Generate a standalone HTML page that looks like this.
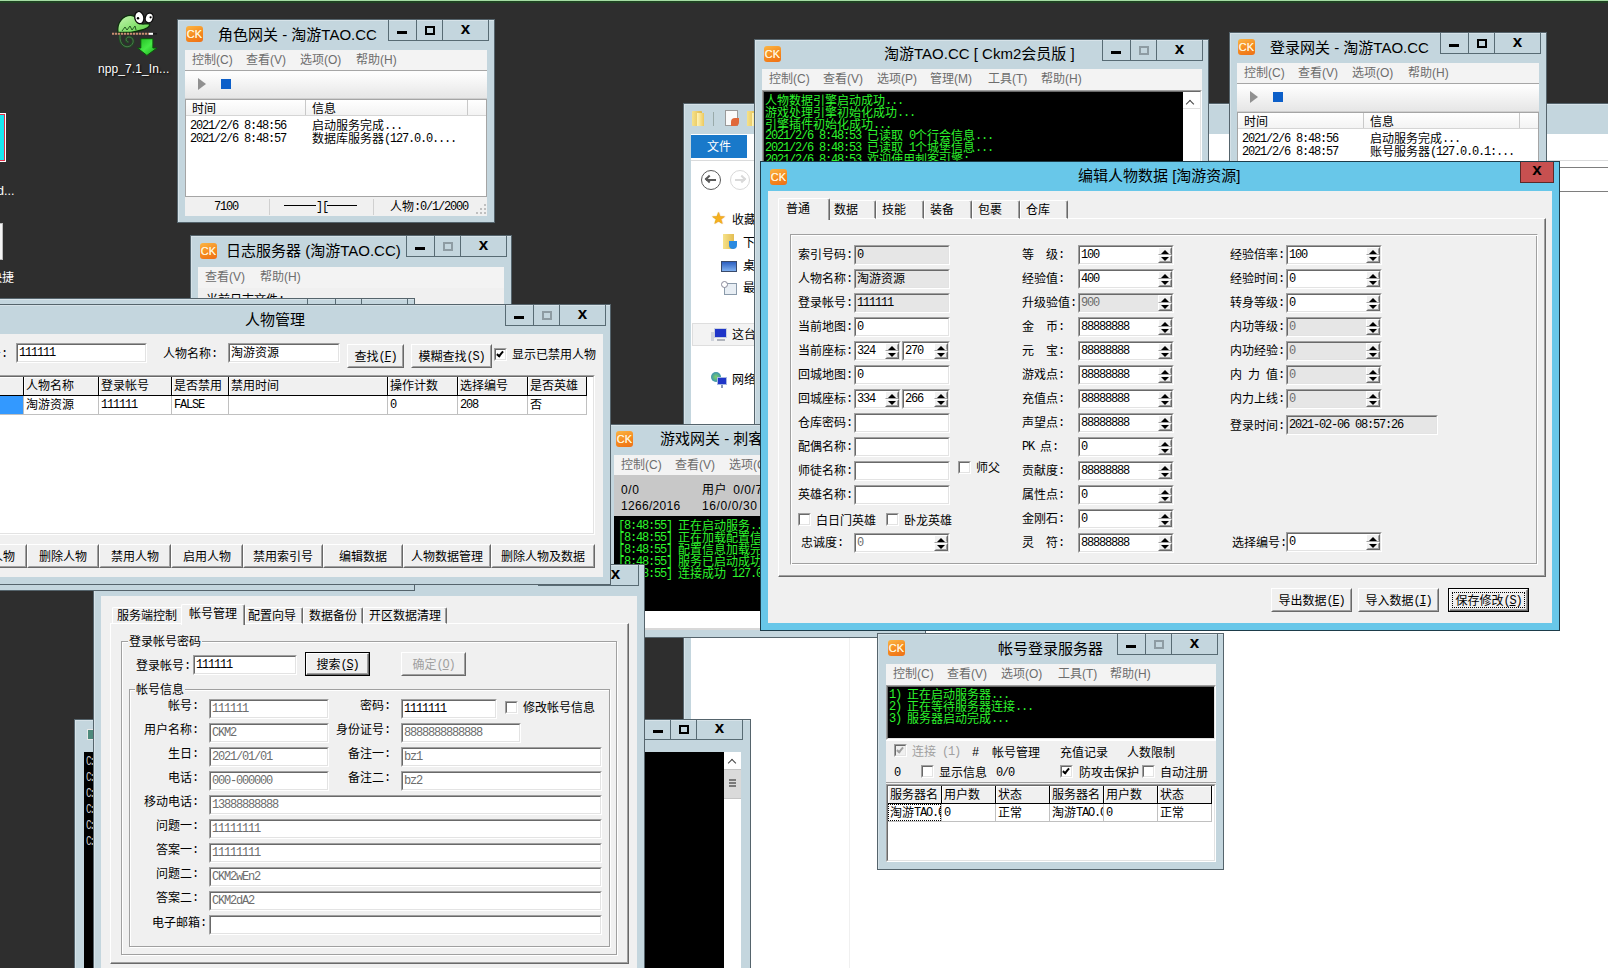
<!DOCTYPE html>
<html lang="zh-CN"><head><meta charset="utf-8"><title>desktop</title>
<style>
html,body{margin:0;padding:0;}
body{width:1608px;height:968px;overflow:hidden;background:#2e2e2e;position:relative;}
div{position:absolute;box-sizing:border-box;}
i{font-style:normal;letter-spacing:-1.2px;position:relative;top:-1px;}
u{text-decoration:underline;}
.s{font:12px/12px "Liberation Mono","Noto Sans CJK SC",monospace;white-space:nowrap;color:#000;height:12px;margin-top:2px;}
.y{font:12px/16px "Liberation Sans","Noto Sans CJK SC",sans-serif;white-space:nowrap;color:#000;}
.t{font-size:15px;line-height:20px;color:#000;}
.m{color:#6d6d6d;}
.w{background:#c4d6de;border:1px solid #55646c;box-shadow:inset 1px 1px 0 rgba(255,255,255,.3);}
.wa{background:#68c7e9;border:1px solid #1d3c4a;}
.cl{background:#f0f0f0;}
.ck{background:linear-gradient(160deg,#fbb544,#f58a1f 55%,#ee6f16);border-radius:3px;overflow:hidden;}
.ck span{position:absolute;left:0;right:0;top:2px;text-align:center;font:11px/13px "Liberation Sans",sans-serif;color:#fff3d8;letter-spacing:0;text-shadow:0 0 0.5px #fff3d8;}
.tb{border:1px solid #586b74;}
.gmin{left:8px;top:11px;width:10px;height:3px;background:#000;}
.gmax{left:8px;top:6px;width:10px;height:9px;border:2px solid #000;}
.gmax.dim{border-color:#8e9ca3;}
.gx{left:0;right:0;top:1px;text-align:center;font:bold 17px/16px "Liberation Sans",sans-serif;color:#000;}
.sk{border:1px solid;border-color:#a0a0a0 #fff #fff #a0a0a0;}
.sk:before{content:"";position:absolute;left:0;top:0;right:0;bottom:0;border:1px solid;border-color:#696969 #e3e3e3 #e3e3e3 #696969;}
.sk>div{z-index:1;}
.sk>.s{left:3px;top:3px;}
.ud{left:auto;background:#f0f0f0;border:1px solid;border-color:#fff #696969 #696969 #fff;}
.ud:before{content:"";position:absolute;left:0;top:0;right:0;bottom:0;border:1px solid;border-color:#f0f0f0 #a0a0a0 #a0a0a0 #f0f0f0;}
.uu{border-bottom-color:#a0a0a0;}
.uu:before{border-bottom-color:#f0f0f0;}
.au{left:2px;top:2px;width:0;height:0;border:4px solid transparent;border-top:0;border-bottom:4px solid #000;}
.ad{left:2px;top:1px;width:0;height:0;border:4px solid transparent;border-bottom:0;border-top:4px solid #000;}
.bt{background:#f0f0f0;border:1px solid;border-color:#fff #696969 #696969 #fff;}
.bt:before{content:"";position:absolute;left:0;top:0;right:0;bottom:0;border:1px solid;border-color:#f0f0f0 #a0a0a0 #a0a0a0 #f0f0f0;}
.bd{border:1px solid #000;}
.bd:before{border-color:#fff #696969 #696969 #fff;box-shadow:inset -1px -1px 0 #a0a0a0;}
.btx{left:0;right:0;top:50%;margin-top:-4px;text-align:center;}
.fr{border:1px dotted #000;}
.cb{border:1px solid;border-color:#a0a0a0 #fff #fff #a0a0a0;}
.cb:before{content:"";position:absolute;left:0;top:0;right:0;bottom:0;border:1px solid;border-color:#696969 #e3e3e3 #e3e3e3 #696969;}
.cm{left:3px;top:1px;width:4px;height:7px;border:solid #000;border-width:0 2px 2px 0;transform:rotate(40deg);}
.cbd .cm{border-color:#a0a0a0;}
.gb{border:1px solid #a0a0a0;box-shadow:1px 1px 0 #fff, inset 1px 1px 0 #fff;}
.con{background:#000;}
.g{color:#2df52d;}

.cmd{font:12px/16px "Liberation Mono",monospace;color:#c8c8c8;white-space:nowrap;letter-spacing:-2.6px;transform:scaleX(0.78);transform-origin:0 0;}
.car{width:6px;height:6px;border-left:1.5px solid #444;border-top:1.5px solid #444;transform:rotate(45deg);}
</style></head>
<body>
<div style="left:0px;top:0px;width:1608px;height:1px;background:#a6dba4;"></div><div style="left:0px;top:1px;width:1608px;height:2px;background:#1f4222;"></div><svg style="position:absolute;left:100px;top:4px" width="70" height="56" viewBox="0 0 70 56"><defs><linearGradient id="gb" x1="0" y1="0" x2="1" y2="1"><stop offset="0" stop-color="#c9f7b4"/><stop offset="1" stop-color="#56d23e"/></linearGradient><linearGradient id="ga" x1="0" y1="0" x2="1" y2="1"><stop offset="0" stop-color="#1fb81f"/><stop offset="0.5" stop-color="#46ea46"/><stop offset="1" stop-color="#18a018"/></linearGradient></defs><path d="M20 31 C19 41 26 45 31 41.5 C35 38 33 33 29 33 C25.5 33 25 37.5 28.5 38" fill="none" stroke="#1f4a22" stroke-width="2.6"/><path d="M20 31 C19 41 26 45 31 41.5 C35 38 33 33 29 33 C25.5 33 25 37.5 28.5 38" fill="none" stroke="#5d8a5d" stroke-width="0.7"/><path d="M18 28.5 C16.5 18 24 10.5 32 11.5 C36 12 38 16 40.5 19.5 C43 21 46 19 49.5 20 C50.5 22.5 46 25.5 40 26.5 L31 28.5 Z" fill="url(#gb)" stroke="#0c300c" stroke-width="1.3"/><path d="M22 27 l3 -4 l2 3 l3 -4 l2 4 l3 -4 l1 4" fill="none" stroke="#1c4a1c" stroke-width="0.9"/><ellipse cx="39.3" cy="13.6" rx="4.5" ry="6.2" transform="rotate(-12 39.3 13.6)" fill="#fff" stroke="#0a0a0a" stroke-width="1.3"/><ellipse cx="49.2" cy="13.9" rx="3.9" ry="4.9" transform="rotate(18 49.2 13.9)" fill="#fff" stroke="#0a0a0a" stroke-width="1.3"/><circle cx="38" cy="14.2" r="1.2" fill="#000"/><circle cx="50.6" cy="13.3" r="1.1" fill="#000"/><path d="M12 29.8 H49" stroke="#c98f72" stroke-width="2" stroke-dasharray="2.2 0.8"/><path d="M49 29.8 H53" stroke="#fff" stroke-width="2"/><path d="M53 29.8 H57" stroke="#151515" stroke-width="1.4"/><path d="M40.8 34.7 H52.9 V44 H57 L46.9 51.4 L37.6 44 H40.8 Z" fill="url(#ga)" stroke="#0b560b" stroke-width="1"/></svg><div class="y" style="left:98px;top:61px;color:#fff;font-size:12px;letter-spacing:0.1px;text-shadow:1px 1px 2px #000;">npp_7.1_In...</div><div style="left:-8px;top:113px;width:14px;height:49px;background:#18e8f0;border:1px solid #fff;box-shadow:inset 0 0 0 1px #e0304a;"></div><div class="y" style="left:-3px;top:183px;color:#fff;font-size:12.5px;">d...</div><div style="left:-8px;top:223px;width:11px;height:37px;background:#f4f4f4;border:1px solid #bbb;"></div><div class="y" style="left:-10px;top:270px;color:#fff;font-size:12px;">快捷</div>
<div class="w" style="left:683px;top:103px;width:1001px;height:901px;overflow:hidden;"><div style="left:-684px;top:-104px;width:0;height:0;"><div style="left:691px;top:134px;width:1000px;height:900px;background:#fff;"></div><div style="left:692px;top:111px;width:10px;height:15px;background:linear-gradient(90deg,#f6e28a,#e0b84a);border-radius:1px;"></div><div style="left:697px;top:113px;width:7px;height:13px;background:linear-gradient(90deg,#fff4b8,#ecc95e);"></div><div style="left:713px;top:112px;width:1px;height:14px;background:#9aa;"></div><div style="left:725px;top:110px;width:13px;height:16px;background:#fafafa;border:1px solid #9a9a9a;"></div><div style="left:731px;top:118px;width:8px;height:8px;background:#e0683a;border-radius:4px 0 4px 0;"></div><div style="left:747px;top:111px;width:10px;height:15px;background:linear-gradient(90deg,#f6e28a,#e0b84a);"></div><div style="left:752px;top:113px;width:8px;height:13px;background:linear-gradient(90deg,#fff4b8,#ecc95e);"></div><div style="left:691px;top:135px;width:56px;height:23px;background:#1979ca;"></div><div class="y" style="left:707px;top:139px;color:#fff;">文件</div><div style="left:691px;top:160px;width:1000px;height:1px;background:#dadbdc;"></div><div style="left:701px;top:170px;width:20px;height:20px;border:1.5px solid #5a5a5a;border-radius:10px;"></div><div style="left:706px;top:179px;width:10px;height:2px;background:#5a5a5a;"></div><div style="left:706px;top:176px;width:6px;height:6px;border-left:2px solid #5a5a5a;border-bottom:2px solid #5a5a5a;transform:rotate(45deg);"></div><div style="left:730px;top:170px;width:20px;height:20px;border:1.5px solid #d9d9d9;border-radius:10px;"></div><div style="left:735px;top:179px;width:10px;height:2px;background:#d9d9d9;"></div><div style="left:739px;top:176px;width:6px;height:6px;border-right:2px solid #d9d9d9;border-top:2px solid #d9d9d9;transform:rotate(45deg);"></div><div style="left:760px;top:167px;width:1000px;height:25px;border:1px solid #7e7e7e;"></div><div style="left:711px;top:209px;font:17px/18px 'DejaVu Sans',sans-serif;color:#f6b01e;text-shadow:0 0 1px #c47f00;">★</div><div class="y" style="left:732px;top:212px;">收藏夹</div><div style="left:723px;top:234px;width:11px;height:15px;background:linear-gradient(90deg,#f6e28a,#e3bd52);"></div><div style="left:729px;top:241px;width:8px;height:8px;background:#2a8ae0;border-radius:0 0 4px 4px;"></div><div class="y" style="left:743px;top:235px;">下载</div><div style="left:721px;top:261px;width:16px;height:11px;background:linear-gradient(#2c5fc0,#7fb0f0);border:1px solid #3a4a6a;"></div><div class="y" style="left:743px;top:258px;">桌面</div><div style="left:724px;top:283px;width:13px;height:12px;background:#e8eef4;border:1px solid #8a9aaa;"></div><div style="left:721px;top:281px;width:7px;height:7px;background:#fff;border:1px solid #889;border-radius:4px;"></div><div class="y" style="left:743px;top:280px;">最近访问的位置</div><div style="left:692px;top:323px;width:200px;height:23px;background:#f3f3f3;border:1px solid #dedede;"></div><div style="left:714px;top:328px;width:13px;height:10px;background:#1f35c8;border:1px solid #c8d0e0;"></div><div style="left:711px;top:332px;width:3px;height:9px;background:#d0d4dc;"></div><div style="left:717px;top:339px;width:8px;height:2px;background:#b0b4bc;"></div><div class="y" style="left:732px;top:327px;">这台电脑</div><div style="left:711px;top:372px;width:10px;height:10px;background:radial-gradient(#7fd36a,#1f78c8);border-radius:5px;"></div><div style="left:717px;top:377px;width:10px;height:8px;background:#1f35c8;border:1px solid #a8b8e0;"></div><div style="left:721px;top:385px;width:2px;height:3px;background:#8898b8;"></div><div class="y" style="left:732px;top:372px;">网络</div><div style="left:849px;top:161px;width:1px;height:900px;background:#f0f0f0;"></div></div></div>
<div class="w" style="left:74px;top:719px;width:677px;height:261px;overflow:hidden;"><div style="left:-75px;top:-720px;width:0;height:0;"><div style="left:87px;top:729px;width:12px;height:11px;background:#4e8a7c;border:1px solid #e8e8e8;"></div><div class="tb" style="left:644px;top:718px;width:27px;height:22px;"><div class="gmin"></div></div><div class="tb" style="left:670px;top:718px;width:27px;height:22px;"><div class="gmax"></div></div><div class="tb" style="left:696px;top:718px;width:47px;height:22px;"><div class="gx">x</div></div><div class="con" style="left:84px;top:752px;width:640px;height:230px;"></div><div class="cmd" style="left:86px;top:754px;">C:</div><div class="cmd" style="left:86px;top:770px;">C:</div><div class="cmd" style="left:86px;top:786px;">C:</div><div class="cmd" style="left:86px;top:802px;">C:</div><div class="cmd" style="left:86px;top:818px;">C:</div><div class="cmd" style="left:86px;top:834px;">C:</div><div style="left:724px;top:752px;width:17px;height:230px;background:#fff;"></div><div class="car" style="left:729px;top:760px;"></div><div style="left:724px;top:769px;width:17px;height:30px;background:#dadada;border-top:1px solid #c4c4c4;border-bottom:1px solid #c4c4c4;"></div><div style="left:729px;top:779px;width:7px;height:2px;background:#7a7a7a;"></div><div style="left:729px;top:782px;width:7px;height:2px;background:#7a7a7a;"></div><div style="left:729px;top:785px;width:7px;height:2px;background:#7a7a7a;"></div></div></div>
<div class="w" style="left:177px;top:19px;width:318px;height:204px;overflow:hidden;"><div style="left:-178px;top:-20px;width:0;height:0;"><div class="ck" style="left:186px;top:26px;width:17px;height:16px;"><span>CK</span></div><div class="y t" style="left:218px;top:25px;">角色网关 - 淘游TAO.CC</div><div class="tb" style="left:388px;top:19px;width:29px;height:22px;"><div class="gmin"></div></div><div class="tb" style="left:416px;top:19px;width:27px;height:22px;"><div class="gmax"></div></div><div class="tb" style="left:442px;top:19px;width:47px;height:22px;"><div class="gx">x</div></div><div class="cl" style="left:185px;top:50px;width:302px;height:166px;"></div><div style="left:185px;top:50px;width:302px;height:21px;background:#f3f3f3;"></div><div class="y m" style="left:192px;top:52px;">控制(C)</div><div class="y m" style="left:246px;top:52px;">查看(V)</div><div class="y m" style="left:300px;top:52px;">选项(O)</div><div class="y m" style="left:356px;top:52px;">帮助(H)</div><div style="left:185px;top:70px;width:302px;height:29px;background:linear-gradient(#fdfdfd 10%,#e6e6e6);border-top:1px solid #a6a6a6;border-bottom:1px solid #cfcfcf;"></div><div style="left:198px;top:78px;width:0px;height:0px;border:6px solid transparent;border-left:8px solid #909090;border-right:0;width:0;height:0;"></div><div style="left:221px;top:79px;width:10px;height:10px;background:#0c5fc9;"></div><div style="left:185px;top:99px;width:302px;height:98px;background:#fff;border:1px solid #a5a5a5;"></div><div style="left:186px;top:100px;width:300px;height:16px;background:linear-gradient(#fff,#f3f3f3);border-bottom:1px solid #d5d5d5;"></div><div style="left:305px;top:100px;width:1px;height:15px;background:#c9c9c9;"></div><div style="left:467px;top:100px;width:1px;height:15px;background:#c9c9c9;"></div><div class="s" style="left:192px;top:102px;">时间</div><div class="s" style="left:312px;top:102px;">信息</div><div class="s" style="left:190px;top:119px;"><i>2021/2/6&nbsp;8:48:56</i></div><div class="s" style="left:190px;top:132px;"><i>2021/2/6&nbsp;8:48:57</i></div><div class="s" style="left:312px;top:119px;">启动服务完成<i>...</i></div><div class="s" style="left:312px;top:132px;">数据库服务器<i>(127.0.0....</i></div><div style="left:269px;top:199px;width:1px;height:16px;background:#d0d0d0;"></div><div style="left:373px;top:199px;width:1px;height:16px;background:#d0d0d0;"></div><div class="s" style="left:214px;top:200px;"><i>7100</i></div><div style="left:284px;top:205px;width:32px;height:1px;background:#000;"></div><div class="s" style="left:316px;top:200px;"><i>][</i></div><div style="left:327px;top:205px;width:30px;height:1px;background:#000;"></div><div class="s" style="left:390px;top:200px;">人物<i>:0/1/2000</i></div><div style="left:484px;top:212px;width:2px;height:2px;background:#bfbfbf;"></div><div style="left:480px;top:212px;width:2px;height:2px;background:#bfbfbf;"></div><div style="left:476px;top:212px;width:2px;height:2px;background:#bfbfbf;"></div><div style="left:484px;top:208px;width:2px;height:2px;background:#bfbfbf;"></div><div style="left:480px;top:208px;width:2px;height:2px;background:#bfbfbf;"></div><div style="left:484px;top:204px;width:2px;height:2px;background:#bfbfbf;"></div></div></div>
<div class="w" style="left:190px;top:235px;width:322px;height:111px;overflow:hidden;"><div style="left:-191px;top:-236px;width:0;height:0;"><div class="ck" style="left:200px;top:243px;width:17px;height:16px;"><span>CK</span></div><div class="y t" style="left:226px;top:241px;">日志服务器 (淘游TAO.CC)</div><div class="tb" style="left:406px;top:235px;width:29px;height:22px;"><div class="gmin"></div></div><div class="tb" style="left:434px;top:235px;width:27px;height:22px;"><div class="gmax dim"></div></div><div class="tb" style="left:460px;top:235px;width:47px;height:22px;"><div class="gx">x</div></div><div class="cl" style="left:198px;top:267px;width:306px;height:100px;"></div><div style="left:198px;top:267px;width:306px;height:21px;background:#f3f3f3;"></div><div class="y m" style="left:205px;top:269px;">查看(V)</div><div class="y m" style="left:260px;top:269px;">帮助(H)</div><div class="s" style="left:206px;top:293px;">当前日志文件<i>:</i></div></div></div>
<div class="w" style="left:754px;top:39px;width:455px;height:561px;overflow:hidden;"><div style="left:-755px;top:-40px;width:0;height:0;"><div class="ck" style="left:764px;top:46px;width:17px;height:16px;"><span>CK</span></div><div class="y t" style="left:884px;top:44px;">淘游TAO.CC [ Ckm2会员版 ]</div><div class="tb" style="left:1102px;top:39px;width:29px;height:22px;"><div class="gmin"></div></div><div class="tb" style="left:1130px;top:39px;width:27px;height:22px;"><div class="gmax dim"></div></div><div class="tb" style="left:1156px;top:39px;width:47px;height:22px;"><div class="gx">x</div></div><div class="cl" style="left:762px;top:69px;width:440px;height:500px;"></div><div style="left:762px;top:69px;width:440px;height:22px;background:#f3f3f3;"></div><div class="y m" style="left:769px;top:71px;">控制(C)</div><div class="y m" style="left:823px;top:71px;">查看(V)</div><div class="y m" style="left:877px;top:71px;">选项(P)</div><div class="y m" style="left:930px;top:71px;">管理(M)</div><div class="y m" style="left:988px;top:71px;">工具(T)</div><div class="y m" style="left:1041px;top:71px;">帮助(H)</div><div class="sk" style="left:762px;top:90px;width:440px;height:300px;background:#000;"></div><div class="s g" style="left:765px;top:94px;">人物数据引擎启动成功<i>...</i></div><div class="s g" style="left:765px;top:106px;">游戏处理引擎初始化成功<i>...</i></div><div class="s g" style="left:765px;top:118px;">引擎插件初始化成功<i>...</i></div><div class="s g" style="left:765px;top:129px;"><i>2021/2/6&nbsp;8:48:53&nbsp;</i>已读取<i>&nbsp;0</i>个行会信息<i>...</i></div><div class="s g" style="left:765px;top:141px;"><i>2021/2/6&nbsp;8:48:53&nbsp;</i>已读取<i>&nbsp;1</i>个城堡信息<i>...</i></div><div class="s g" style="left:765px;top:153px;"><i>2021/2/6&nbsp;8:48:53&nbsp;</i>欢迎使用刺客引擎<i>:</i></div><div style="left:1183px;top:92px;width:17px;height:300px;background:#fff;"></div><div class="car" style="left:1187px;top:101px;"></div><div style="left:1183px;top:108px;width:17px;height:1px;background:#e0e0e0;"></div></div></div>
<div class="w" style="left:606px;top:424px;width:320px;height:214px;overflow:hidden;"><div style="left:-607px;top:-425px;width:0;height:0;"><div class="ck" style="left:616px;top:431px;width:17px;height:16px;"><span>CK</span></div><div class="y t" style="left:660px;top:429px;">游戏网关 - 刺客引擎</div><div class="tb" style="left:818px;top:423px;width:29px;height:22px;"><div class="gmin"></div></div><div class="tb" style="left:846px;top:423px;width:27px;height:22px;"><div class="gmax"></div></div><div class="tb" style="left:872px;top:423px;width:47px;height:22px;"><div class="gx">x</div></div><div class="cl" style="left:614px;top:455px;width:305px;height:175px;"></div><div style="left:614px;top:455px;width:305px;height:21px;background:#f3f3f3;"></div><div class="y m" style="left:621px;top:457px;">控制(C)</div><div class="y m" style="left:675px;top:457px;">查看(V)</div><div class="y m" style="left:729px;top:457px;">选项(O)</div><div class="y m" style="left:785px;top:457px;">帮助(H)</div><div style="left:614px;top:475px;width:305px;height:42px;background:#c8c8c8;"></div><div class="y" style="left:621px;top:482px;font-size:12px;letter-spacing:0.6px;">0/0</div><div class="y" style="left:702px;top:482px;font-size:12px;letter-spacing:0.6px;word-spacing:2px;">用户 0/0/7000</div><div class="y" style="left:621px;top:498px;font-size:12px;letter-spacing:0.3px;">1266/2016</div><div class="y" style="left:702px;top:498px;font-size:12px;letter-spacing:0.6px;">16/0/0/30</div><div class="con" style="left:614px;top:516px;width:305px;height:95px;"></div><div class="s g" style="left:618px;top:519px;"><i>[8:48:55]&nbsp;</i>正在启动服务<i>...</i></div><div class="s g" style="left:618px;top:531px;"><i>[8:48:55]&nbsp;</i>正在加载配置信息<i>...</i></div><div class="s g" style="left:618px;top:543px;"><i>[8:48:55]&nbsp;</i>配置信息加载完成<i>...</i></div><div class="s g" style="left:618px;top:555px;"><i>[8:48:55]&nbsp;</i>服务已启动成功<i>...</i></div><div class="s g" style="left:618px;top:567px;"><i>[8:48:55]&nbsp;</i>连接成功<i>&nbsp;127.0.0.1:5100</i></div><div style="left:614px;top:611px;width:305px;height:19px;background:#fff;border-bottom:2px solid #d8d8d8;"></div></div></div>
<div class="w" style="left:93px;top:564px;width:552px;height:421px;overflow:hidden;"><div style="left:-94px;top:-565px;width:0;height:0;"><div class="tb" style="left:538px;top:564px;width:29px;height:22px;"><div class="gmin"></div></div><div class="tb" style="left:566px;top:564px;width:27px;height:22px;"><div class="gmax dim"></div></div><div class="tb" style="left:592px;top:564px;width:47px;height:22px;"><div class="gx">x</div></div><div class="cl" style="left:101px;top:596px;width:536px;height:380px;"></div><div style="left:110px;top:623px;width:519px;height:341px;border:1px solid;border-color:#fff #696969 #696969 #fff;box-shadow:inset -1px -1px 0 #a0a0a0;"></div><div style="left:112px;top:607px;width:72px;height:17px;border:1px solid;border-color:#fff #696969 transparent #fff;border-radius:2px 2px 0 0;box-shadow:inset -1px 0 0 #a0a0a0;"></div><div class="s" style="left:117px;top:609px;">服务端控制</div><div style="left:245px;top:607px;width:58px;height:17px;border:1px solid;border-color:#fff #696969 transparent #fff;border-radius:2px 2px 0 0;box-shadow:inset -1px 0 0 #a0a0a0;"></div><div class="s" style="left:248px;top:609px;">配置向导</div><div style="left:303px;top:607px;width:60px;height:17px;border:1px solid;border-color:#fff #696969 transparent #fff;border-radius:2px 2px 0 0;box-shadow:inset -1px 0 0 #a0a0a0;"></div><div class="s" style="left:309px;top:609px;">数据备份</div><div style="left:363px;top:607px;width:84px;height:17px;border:1px solid;border-color:#fff #696969 transparent #fff;border-radius:2px 2px 0 0;box-shadow:inset -1px 0 0 #a0a0a0;"></div><div class="s" style="left:369px;top:609px;">开区数据清理</div><div style="left:181px;top:604px;width:64px;height:21px;background:#f0f0f0;border:1px solid;border-color:#fff #696969 #f0f0f0 #fff;border-bottom:0;border-radius:2px 2px 0 0;box-shadow:inset -1px 0 0 #a0a0a0;"></div><div class="s" style="left:189px;top:607px;">帐号管理</div><div class="gb" style="left:121px;top:641px;width:496px;height:314px;"></div><div class="s" style="left:128px;top:635px;background:#f0f0f0;padding:0 1px;">登录帐号密码</div><div class="s" style="left:136px;top:659px;">登录帐号<i>:</i></div><div class="sk" style="left:193px;top:655px;width:104px;height:20px;background:#fff;"><div class="s" style="left:2px;top:2px;color:#000;"><i>111111</i></div></div><div class="bt bd" style="left:305px;top:652px;width:65px;height:24px;"><div class="s btx" style="color:#000;">搜索<i>(<u>S</u>)</i></div></div><div class="bt" style="left:401px;top:652px;width:65px;height:24px;"><div class="s btx" style="color:#a0a0a0;">确定<i>(<u>O</u>)</i></div></div><div class="gb" style="left:129px;top:689px;width:481px;height:258px;"></div><div class="s" style="left:135px;top:683px;background:#f0f0f0;padding:0 1px;">帐号信息</div><div class="s" style="right:-198px;top:699px;">帐号<i>:</i></div><div class="sk" style="left:209px;top:699px;width:120px;height:20px;background:#fff;"><div class="s" style="left:2px;top:2px;color:#6d6d6d;"><i>111111</i></div></div><div class="s" style="right:-198px;top:723px;">用户名称<i>:</i></div><div class="sk" style="left:209px;top:723px;width:120px;height:20px;background:#fff;"><div class="s" style="left:2px;top:2px;color:#6d6d6d;"><i>CKM2</i></div></div><div class="s" style="right:-198px;top:747px;">生日<i>:</i></div><div class="sk" style="left:209px;top:747px;width:120px;height:20px;background:#fff;"><div class="s" style="left:2px;top:2px;color:#6d6d6d;"><i>2021/01/01</i></div></div><div class="s" style="right:-198px;top:771px;">电话<i>:</i></div><div class="sk" style="left:209px;top:771px;width:120px;height:20px;background:#fff;"><div class="s" style="left:2px;top:2px;color:#6d6d6d;"><i>000-000000</i></div></div><div class="s" style="right:-198px;top:795px;">移动电话<i>:</i></div><div class="sk" style="left:209px;top:795px;width:393px;height:20px;background:#fff;"><div class="s" style="left:2px;top:2px;color:#6d6d6d;"><i>13888888888</i></div></div><div class="s" style="right:-198px;top:819px;">问题一<i>:</i></div><div class="sk" style="left:209px;top:819px;width:393px;height:20px;background:#fff;"><div class="s" style="left:2px;top:2px;color:#6d6d6d;"><i>11111111</i></div></div><div class="s" style="right:-198px;top:843px;">答案一<i>:</i></div><div class="sk" style="left:209px;top:843px;width:393px;height:20px;background:#fff;"><div class="s" style="left:2px;top:2px;color:#6d6d6d;"><i>11111111</i></div></div><div class="s" style="right:-198px;top:867px;">问题二<i>:</i></div><div class="sk" style="left:209px;top:867px;width:393px;height:20px;background:#fff;"><div class="s" style="left:2px;top:2px;color:#6d6d6d;"><i>CKM2wEn2</i></div></div><div class="s" style="right:-198px;top:891px;">答案二<i>:</i></div><div class="sk" style="left:209px;top:891px;width:393px;height:20px;background:#fff;"><div class="s" style="left:2px;top:2px;color:#6d6d6d;"><i>CKM2dA2</i></div></div><div class="s" style="left:152px;top:916px;">电子邮箱<i>:</i></div><div class="sk" style="left:209px;top:915px;width:393px;height:20px;background:#fff;"></div><div class="s" style="right:-390px;top:699px;">密码<i>:</i></div><div class="sk" style="left:401px;top:699px;width:96px;height:20px;background:#fff;"><div class="s" style="left:2px;top:2px;color:#000;"><i>1111111</i></div></div><div class="s" style="right:-390px;top:723px;">身份证号<i>:</i></div><div class="sk" style="left:401px;top:723px;width:120px;height:20px;background:#fff;"><div class="s" style="left:2px;top:2px;color:#6d6d6d;"><i>8888888888888</i></div></div><div class="s" style="right:-390px;top:747px;">备注一<i>:</i></div><div class="sk" style="left:401px;top:747px;width:201px;height:20px;background:#fff;"><div class="s" style="left:2px;top:2px;color:#6d6d6d;"><i>bz1</i></div></div><div class="s" style="right:-390px;top:771px;">备注二<i>:</i></div><div class="sk" style="left:401px;top:771px;width:201px;height:20px;background:#fff;"><div class="s" style="left:2px;top:2px;color:#6d6d6d;"><i>bz2</i></div></div><div class="cb" style="left:505px;top:701px;width:13px;height:13px;background:#fff;"></div><div class="s" style="left:523px;top:701px;">修改帐号信息</div></div></div>
<div class="w" style="left:-7px;top:298px;width:422px;height:293px;overflow:hidden;"><div style="left:6px;top:-299px;width:0;height:0;"><div class="tb" style="left:307px;top:298px;width:29px;height:22px;"></div><div class="tb" style="left:335px;top:298px;width:27px;height:22px;"></div><div class="tb" style="left:361px;top:298px;width:47px;height:22px;"></div></div></div>
<div class="w" style="left:-7px;top:304px;width:618px;height:281px;overflow:hidden;"><div style="left:6px;top:-305px;width:0;height:0;"><div class="y t" style="left:245px;top:310px;">人物管理</div><div class="tb" style="left:505px;top:304px;width:29px;height:22px;"><div class="gmin"></div></div><div class="tb" style="left:533px;top:304px;width:27px;height:22px;"><div class="gmax dim"></div></div><div class="tb" style="left:559px;top:304px;width:47px;height:22px;"><div class="gx">x</div></div><div class="cl" style="left:-6px;top:334px;width:609px;height:243px;"></div><div class="s" style="left:-47px;top:347px;">登录帐号<i>:</i></div><div class="sk" style="left:16px;top:343px;width:131px;height:20px;background:#fff;"><div class="s" style="left:2px;top:2px;color:#000;"><i>111111</i></div></div><div class="s" style="left:163px;top:347px;">人物名称<i>:</i></div><div class="sk" style="left:228px;top:343px;width:112px;height:20px;background:#fff;"><div class="s" style="left:2px;top:2px;color:#000;">淘游资源</div></div><div class="bt" style="left:347px;top:344px;width:57px;height:24px;"><div class="s btx" style="color:#000;">查找<i>(<u>F</u>)</i></div></div><div class="bt" style="left:411px;top:344px;width:81px;height:24px;"><div class="s btx" style="color:#000;">模糊查找<i>(S)</i></div></div><div class="cb" style="left:494px;top:348px;width:13px;height:13px;background:#fff;"><div class="cm"></div></div><div class="s" style="left:512px;top:348px;">显示已禁用人物</div><div class="sk" style="left:-6px;top:375px;width:601px;height:160px;background:#fff;"></div><div style="left:-19px;top:377px;width:43px;height:19px;background:#f0f0f0;border-right:1px solid #000;border-bottom:1px solid #000;box-shadow:inset 1px 1px 0 #fff;"></div><div style="left:-19px;top:396px;width:43px;height:19px;background:#3399ff;border-right:1px solid #c0c0c0;border-bottom:1px solid #c0c0c0;"></div><div style="left:24px;top:377px;width:75px;height:19px;background:#f0f0f0;border-right:1px solid #000;border-bottom:1px solid #000;box-shadow:inset 1px 1px 0 #fff;"></div><div class="s" style="left:26px;top:379px;">人物名称</div><div style="left:24px;top:396px;width:75px;height:19px;background:#fff;border-right:1px solid #c0c0c0;border-bottom:1px solid #c0c0c0;"></div><div class="s" style="left:26px;top:398px;">淘游资源</div><div style="left:99px;top:377px;width:73px;height:19px;background:#f0f0f0;border-right:1px solid #000;border-bottom:1px solid #000;box-shadow:inset 1px 1px 0 #fff;"></div><div class="s" style="left:101px;top:379px;">登录帐号</div><div style="left:99px;top:396px;width:73px;height:19px;background:#fff;border-right:1px solid #c0c0c0;border-bottom:1px solid #c0c0c0;"></div><div class="s" style="left:101px;top:398px;"><i>111111</i></div><div style="left:172px;top:377px;width:57px;height:19px;background:#f0f0f0;border-right:1px solid #000;border-bottom:1px solid #000;box-shadow:inset 1px 1px 0 #fff;"></div><div class="s" style="left:174px;top:379px;">是否禁用</div><div style="left:172px;top:396px;width:57px;height:19px;background:#fff;border-right:1px solid #c0c0c0;border-bottom:1px solid #c0c0c0;"></div><div class="s" style="left:174px;top:398px;"><i>FALSE</i></div><div style="left:229px;top:377px;width:159px;height:19px;background:#f0f0f0;border-right:1px solid #000;border-bottom:1px solid #000;box-shadow:inset 1px 1px 0 #fff;"></div><div class="s" style="left:231px;top:379px;">禁用时间</div><div style="left:229px;top:396px;width:159px;height:19px;background:#fff;border-right:1px solid #c0c0c0;border-bottom:1px solid #c0c0c0;"></div><div style="left:388px;top:377px;width:70px;height:19px;background:#f0f0f0;border-right:1px solid #000;border-bottom:1px solid #000;box-shadow:inset 1px 1px 0 #fff;"></div><div class="s" style="left:390px;top:379px;">操作计数</div><div style="left:388px;top:396px;width:70px;height:19px;background:#fff;border-right:1px solid #c0c0c0;border-bottom:1px solid #c0c0c0;"></div><div class="s" style="left:390px;top:398px;"><i>0</i></div><div style="left:458px;top:377px;width:70px;height:19px;background:#f0f0f0;border-right:1px solid #000;border-bottom:1px solid #000;box-shadow:inset 1px 1px 0 #fff;"></div><div class="s" style="left:460px;top:379px;">选择编号</div><div style="left:458px;top:396px;width:70px;height:19px;background:#fff;border-right:1px solid #c0c0c0;border-bottom:1px solid #c0c0c0;"></div><div class="s" style="left:460px;top:398px;"><i>208</i></div><div style="left:528px;top:377px;width:59px;height:19px;background:#f0f0f0;border-right:1px solid #000;border-bottom:1px solid #000;box-shadow:inset 1px 1px 0 #fff;"></div><div class="s" style="left:530px;top:379px;">是否英雄</div><div style="left:528px;top:396px;width:59px;height:19px;background:#fff;border-right:1px solid #c0c0c0;border-bottom:1px solid #c0c0c0;"></div><div class="s" style="left:530px;top:398px;">否</div><div class="bt" style="left:-45px;top:544px;width:72px;height:24px;"><div class="s btx" style="color:#000;">添加人物</div></div><div class="bt" style="left:27px;top:544px;width:72px;height:24px;"><div class="s btx" style="color:#000;">删除人物</div></div><div class="bt" style="left:99px;top:544px;width:72px;height:24px;"><div class="s btx" style="color:#000;">禁用人物</div></div><div class="bt" style="left:171px;top:544px;width:72px;height:24px;"><div class="s btx" style="color:#000;">启用人物</div></div><div class="bt" style="left:243px;top:544px;width:80px;height:24px;"><div class="s btx" style="color:#000;">禁用索引号</div></div><div class="bt" style="left:323px;top:544px;width:80px;height:24px;"><div class="s btx" style="color:#000;">编辑数据</div></div><div class="bt" style="left:403px;top:544px;width:88px;height:24px;"><div class="s btx" style="color:#000;">人物数据管理</div></div><div class="bt" style="left:491px;top:544px;width:104px;height:24px;"><div class="s btx" style="color:#000;">删除人物及数据</div></div></div></div>
<div class="w" style="left:1229px;top:32px;width:318px;height:204px;overflow:hidden;"><div style="left:-1230px;top:-33px;width:0;height:0;"><div class="ck" style="left:1238px;top:39px;width:17px;height:16px;"><span>CK</span></div><div class="y t" style="left:1270px;top:38px;">登录网关 - 淘游TAO.CC</div><div class="tb" style="left:1440px;top:32px;width:29px;height:22px;"><div class="gmin"></div></div><div class="tb" style="left:1468px;top:32px;width:27px;height:22px;"><div class="gmax"></div></div><div class="tb" style="left:1494px;top:32px;width:47px;height:22px;"><div class="gx">x</div></div><div class="cl" style="left:1237px;top:63px;width:302px;height:166px;"></div><div style="left:1237px;top:63px;width:302px;height:21px;background:#f3f3f3;"></div><div class="y m" style="left:1244px;top:65px;">控制(C)</div><div class="y m" style="left:1298px;top:65px;">查看(V)</div><div class="y m" style="left:1352px;top:65px;">选项(O)</div><div class="y m" style="left:1408px;top:65px;">帮助(H)</div><div style="left:1237px;top:83px;width:302px;height:29px;background:linear-gradient(#fdfdfd 10%,#e6e6e6);border-top:1px solid #a6a6a6;border-bottom:1px solid #cfcfcf;"></div><div style="left:1250px;top:91px;width:0px;height:0px;border:6px solid transparent;border-left:8px solid #909090;border-right:0;width:0;height:0;"></div><div style="left:1273px;top:92px;width:10px;height:10px;background:#0c5fc9;"></div><div style="left:1237px;top:112px;width:302px;height:98px;background:#fff;border:1px solid #a5a5a5;"></div><div style="left:1238px;top:113px;width:300px;height:16px;background:linear-gradient(#fff,#f3f3f3);border-bottom:1px solid #d5d5d5;"></div><div style="left:1363px;top:113px;width:1px;height:15px;background:#c9c9c9;"></div><div style="left:1519px;top:113px;width:1px;height:15px;background:#c9c9c9;"></div><div class="s" style="left:1244px;top:115px;">时间</div><div class="s" style="left:1370px;top:115px;">信息</div><div class="s" style="left:1242px;top:132px;"><i>2021/2/6&nbsp;8:48:56</i></div><div class="s" style="left:1242px;top:145px;"><i>2021/2/6&nbsp;8:48:57</i></div><div class="s" style="left:1370px;top:132px;">启动服务完成<i>...</i></div><div class="s" style="left:1370px;top:145px;">账号服务器<i>(127.0.0.1:...</i></div></div></div>
<div class="w" style="left:877px;top:633px;width:347px;height:237px;overflow:hidden;"><div style="left:-878px;top:-634px;width:0;height:0;"><div class="ck" style="left:888px;top:640px;width:17px;height:16px;"><span>CK</span></div><div class="y t" style="left:998px;top:639px;">帐号登录服务器</div><div class="tb" style="left:1117px;top:633px;width:29px;height:22px;"><div class="gmin"></div></div><div class="tb" style="left:1145px;top:633px;width:27px;height:22px;"><div class="gmax dim"></div></div><div class="tb" style="left:1171px;top:633px;width:47px;height:22px;"><div class="gx">x</div></div><div class="cl" style="left:886px;top:664px;width:330px;height:198px;"></div><div style="left:886px;top:664px;width:330px;height:21px;background:#f3f3f3;"></div><div class="y m" style="left:893px;top:666px;">控制(C)</div><div class="y m" style="left:947px;top:666px;">查看(V)</div><div class="y m" style="left:1001px;top:666px;">选项(O)</div><div class="y m" style="left:1058px;top:666px;">工具(T)</div><div class="y m" style="left:1110px;top:666px;">帮助(H)</div><div class="sk" style="left:886px;top:685px;width:330px;height:55px;background:#000;"></div><div class="s g" style="left:889px;top:688px;"><i>1)&nbsp;</i>正在启动服务器<i>...</i></div><div class="s g" style="left:889px;top:700px;"><i>2)&nbsp;</i>正在等待服务器连接<i>...</i></div><div class="s g" style="left:889px;top:712px;"><i>3)&nbsp;</i>服务器启动完成<i>...</i></div><div style="left:886px;top:740px;width:330px;height:43px;background:#f0f0f0;border-top:1px solid #fff;border-bottom:1px solid #a0a0a0;"></div><div class="cb cbd" style="left:894px;top:744px;width:13px;height:13px;background:#f0f0f0;"><div class="cm"></div></div><div class="s" style="left:912px;top:745px;color:#a0a0a0;">连接<i>&nbsp;(1)</i></div><div class="s" style="left:972px;top:746px;"><i>#</i></div><div class="s" style="left:992px;top:746px;">帐号管理</div><div class="s" style="left:1060px;top:746px;">充值记录</div><div class="s" style="left:1127px;top:746px;">人数限制</div><div class="s" style="left:894px;top:766px;"><i>0</i></div><div class="cb" style="left:921px;top:765px;width:13px;height:13px;background:#fff;"></div><div class="s" style="left:939px;top:766px;">显示信息</div><div class="s" style="left:996px;top:766px;"><i>0/0</i></div><div class="cb" style="left:1060px;top:765px;width:13px;height:13px;background:#fff;"><div class="cm"></div></div><div class="s" style="left:1079px;top:766px;">防攻击保护</div><div class="cb" style="left:1142px;top:765px;width:13px;height:13px;background:#fff;"></div><div class="s" style="left:1160px;top:766px;">自动注册</div><div class="sk" style="left:886px;top:784px;width:330px;height:78px;background:#fff;"></div><div style="left:888px;top:786px;width:54px;height:18px;background:#f0f0f0;border-right:1px solid #000;border-bottom:1px solid #000;box-shadow:inset 1px 1px 0 #fff;overflow:hidden;"><div class="s" style="left:2px;top:2px;">服务器名</div></div><div style="left:888px;top:804px;width:54px;height:18px;background:#fff;border-right:1px solid #c0c0c0;border-bottom:1px solid #c0c0c0;overflow:hidden;"><div class="s" style="left:2px;top:2px;">淘游<i>TAO.CC</i></div></div><div style="left:942px;top:786px;width:54px;height:18px;background:#f0f0f0;border-right:1px solid #000;border-bottom:1px solid #000;box-shadow:inset 1px 1px 0 #fff;overflow:hidden;"><div class="s" style="left:2px;top:2px;">用户数</div></div><div style="left:942px;top:804px;width:54px;height:18px;background:#fff;border-right:1px solid #c0c0c0;border-bottom:1px solid #c0c0c0;overflow:hidden;"><div class="s" style="left:2px;top:2px;"><i>0</i></div></div><div style="left:996px;top:786px;width:54px;height:18px;background:#f0f0f0;border-right:1px solid #000;border-bottom:1px solid #000;box-shadow:inset 1px 1px 0 #fff;overflow:hidden;"><div class="s" style="left:2px;top:2px;">状态</div></div><div style="left:996px;top:804px;width:54px;height:18px;background:#fff;border-right:1px solid #c0c0c0;border-bottom:1px solid #c0c0c0;overflow:hidden;"><div class="s" style="left:2px;top:2px;">正常</div></div><div style="left:1050px;top:786px;width:54px;height:18px;background:#f0f0f0;border-right:1px solid #000;border-bottom:1px solid #000;box-shadow:inset 1px 1px 0 #fff;overflow:hidden;"><div class="s" style="left:2px;top:2px;">服务器名</div></div><div style="left:1050px;top:804px;width:54px;height:18px;background:#fff;border-right:1px solid #c0c0c0;border-bottom:1px solid #c0c0c0;overflow:hidden;"><div class="s" style="left:2px;top:2px;">淘游<i>TAO.CC</i></div></div><div style="left:1104px;top:786px;width:54px;height:18px;background:#f0f0f0;border-right:1px solid #000;border-bottom:1px solid #000;box-shadow:inset 1px 1px 0 #fff;overflow:hidden;"><div class="s" style="left:2px;top:2px;">用户数</div></div><div style="left:1104px;top:804px;width:54px;height:18px;background:#fff;border-right:1px solid #c0c0c0;border-bottom:1px solid #c0c0c0;overflow:hidden;"><div class="s" style="left:2px;top:2px;"><i>0</i></div></div><div style="left:1158px;top:786px;width:54px;height:18px;background:#f0f0f0;border-right:1px solid #000;border-bottom:1px solid #000;box-shadow:inset 1px 1px 0 #fff;overflow:hidden;"><div class="s" style="left:2px;top:2px;">状态</div></div><div style="left:1158px;top:804px;width:54px;height:18px;background:#fff;border-right:1px solid #c0c0c0;border-bottom:1px solid #c0c0c0;overflow:hidden;"><div class="s" style="left:2px;top:2px;">正常</div></div><div class="fr" style="left:888px;top:804px;width:53px;height:17px;"></div></div></div>
<div class="wa" style="left:760px;top:161px;width:800px;height:470px;overflow:hidden;"><div style="left:-761px;top:-162px;width:0;height:0;"><div class="ck" style="left:770px;top:169px;width:17px;height:16px;"><span>CK</span></div><div class="y t" style="left:1078px;top:166px;">编辑人物数据 [淘游资源]</div><div style="left:1520px;top:161px;width:34px;height:22px;background:#c75050;border:1px solid #5a2a2a;border-top:0;"><div class="gx">x</div></div><div class="cl" style="left:768px;top:191px;width:784px;height:432px;"></div><div style="left:778px;top:218px;width:768px;height:359px;border:1px solid;border-color:#fff #696969 #696969 #fff;box-shadow:inset -1px -1px 0 #a0a0a0;"></div><div style="left:829px;top:200px;width:47px;height:19px;border:1px solid;border-color:#fff #696969 transparent #fff;border-radius:2px 2px 0 0;box-shadow:inset -1px 0 0 #a0a0a0;"></div><div class="s" style="left:834px;top:203px;">数据</div><div style="left:876px;top:200px;width:48px;height:19px;border:1px solid;border-color:#fff #696969 transparent #fff;border-radius:2px 2px 0 0;box-shadow:inset -1px 0 0 #a0a0a0;"></div><div class="s" style="left:882px;top:203px;">技能</div><div style="left:924px;top:200px;width:48px;height:19px;border:1px solid;border-color:#fff #696969 transparent #fff;border-radius:2px 2px 0 0;box-shadow:inset -1px 0 0 #a0a0a0;"></div><div class="s" style="left:930px;top:203px;">装备</div><div style="left:972px;top:200px;width:48px;height:19px;border:1px solid;border-color:#fff #696969 transparent #fff;border-radius:2px 2px 0 0;box-shadow:inset -1px 0 0 #a0a0a0;"></div><div class="s" style="left:978px;top:203px;">包裹</div><div style="left:1020px;top:200px;width:48px;height:19px;border:1px solid;border-color:#fff #696969 transparent #fff;border-radius:2px 2px 0 0;box-shadow:inset -1px 0 0 #a0a0a0;"></div><div class="s" style="left:1026px;top:203px;">仓库</div><div style="left:778px;top:198px;width:52px;height:22px;background:#f0f0f0;border:1px solid;border-color:#fff #696969 #f0f0f0 #fff;border-bottom:0;border-radius:2px 2px 0 0;box-shadow:inset -1px 0 0 #a0a0a0;"></div><div class="s" style="left:786px;top:202px;">普通</div><div style="left:790px;top:234px;width:748px;height:331px;border:1px solid;border-color:#a0a0a0 #fff #fff #a0a0a0;box-shadow:inset 1px 1px 0 #fff, inset -1px -1px 0 #a0a0a0;"></div><div class="s" style="left:798px;top:248px;">索引号码<i>:</i></div><div class="s" style="left:798px;top:272px;">人物名称<i>:</i></div><div class="s" style="left:798px;top:296px;">登录帐号<i>:</i></div><div class="s" style="left:798px;top:320px;">当前地图<i>:</i></div><div class="s" style="left:798px;top:344px;">当前座标<i>:</i></div><div class="s" style="left:798px;top:368px;">回城地图<i>:</i></div><div class="s" style="left:798px;top:392px;">回城座标<i>:</i></div><div class="s" style="left:798px;top:416px;">仓库密码<i>:</i></div><div class="s" style="left:798px;top:440px;">配偶名称<i>:</i></div><div class="s" style="left:798px;top:464px;">师徒名称<i>:</i></div><div class="s" style="left:798px;top:488px;">英雄名称<i>:</i></div><div class="sk" style="left:854px;top:245px;width:96px;height:20px;background:#e6e6e6;"><div class="s" style="left:2px;top:2px;color:#000;"><i>0</i></div></div><div class="sk" style="left:854px;top:269px;width:96px;height:20px;background:#e6e6e6;"><div class="s" style="left:2px;top:2px;color:#000;">淘游资源</div></div><div class="sk" style="left:854px;top:293px;width:96px;height:20px;background:#e6e6e6;"><div class="s" style="left:2px;top:2px;color:#000;"><i>111111</i></div></div><div class="sk" style="left:854px;top:317px;width:96px;height:20px;background:#fff;"><div class="s" style="left:2px;top:2px;color:#000;"><i>0</i></div></div><div class="sk" style="left:854px;top:341px;width:47px;height:20px;background:#fff;"><div class="s" style="left:2px;top:2px;color:#000;"><i>324</i></div><div class="ud uu" style="left:30px;top:1px;width:14px;height:8px;"><div class="au"></div></div><div class="ud" style="left:30px;top:9px;width:14px;height:8px;"><div class="ad"></div></div></div><div class="sk" style="left:902px;top:341px;width:48px;height:20px;background:#fff;"><div class="s" style="left:2px;top:2px;color:#000;"><i>270</i></div><div class="ud uu" style="left:31px;top:1px;width:14px;height:8px;"><div class="au"></div></div><div class="ud" style="left:31px;top:9px;width:14px;height:8px;"><div class="ad"></div></div></div><div class="sk" style="left:854px;top:365px;width:96px;height:20px;background:#fff;"><div class="s" style="left:2px;top:2px;color:#000;"><i>0</i></div></div><div class="sk" style="left:854px;top:389px;width:47px;height:20px;background:#fff;"><div class="s" style="left:2px;top:2px;color:#000;"><i>334</i></div><div class="ud uu" style="left:30px;top:1px;width:14px;height:8px;"><div class="au"></div></div><div class="ud" style="left:30px;top:9px;width:14px;height:8px;"><div class="ad"></div></div></div><div class="sk" style="left:902px;top:389px;width:48px;height:20px;background:#fff;"><div class="s" style="left:2px;top:2px;color:#000;"><i>266</i></div><div class="ud uu" style="left:31px;top:1px;width:14px;height:8px;"><div class="au"></div></div><div class="ud" style="left:31px;top:9px;width:14px;height:8px;"><div class="ad"></div></div></div><div class="sk" style="left:854px;top:413px;width:96px;height:20px;background:#fff;"></div><div class="sk" style="left:854px;top:437px;width:96px;height:20px;background:#fff;"></div><div class="sk" style="left:854px;top:461px;width:96px;height:20px;background:#fff;"></div><div class="sk" style="left:854px;top:485px;width:96px;height:20px;background:#fff;"></div><div class="cb" style="left:958px;top:461px;width:13px;height:13px;background:#fff;"></div><div class="s" style="left:976px;top:461px;">师父</div><div class="cb" style="left:798px;top:513px;width:13px;height:13px;background:#fff;"></div><div class="s" style="left:816px;top:514px;">白日门英雄</div><div class="cb" style="left:886px;top:513px;width:13px;height:13px;background:#fff;"></div><div class="s" style="left:904px;top:514px;">卧龙英雄</div><div class="s" style="left:801px;top:536px;">忠诚度<i>:</i></div><div class="sk" style="left:854px;top:533px;width:96px;height:20px;background:#fff;"><div class="s" style="left:2px;top:2px;color:#6d6d6d;"><i>0</i></div><div class="ud uu" style="left:79px;top:1px;width:14px;height:8px;"><div class="au"></div></div><div class="ud" style="left:79px;top:9px;width:14px;height:8px;"><div class="ad"></div></div></div><div class="s" style="left:1022px;top:248px;">等<i>&nbsp;&nbsp;</i>级<i>:</i></div><div class="sk" style="left:1078px;top:245px;width:96px;height:20px;background:#fff;"><div class="s" style="left:2px;top:2px;color:#000;"><i>100</i></div><div class="ud uu" style="left:79px;top:1px;width:14px;height:8px;"><div class="au"></div></div><div class="ud" style="left:79px;top:9px;width:14px;height:8px;"><div class="ad"></div></div></div><div class="s" style="left:1022px;top:272px;">经验值<i>:</i></div><div class="sk" style="left:1078px;top:269px;width:96px;height:20px;background:#fff;"><div class="s" style="left:2px;top:2px;color:#000;"><i>400</i></div><div class="ud uu" style="left:79px;top:1px;width:14px;height:8px;"><div class="au"></div></div><div class="ud" style="left:79px;top:9px;width:14px;height:8px;"><div class="ad"></div></div></div><div class="s" style="left:1022px;top:296px;">升级验值<i>:</i></div><div class="sk" style="left:1078px;top:293px;width:96px;height:20px;background:#e6e6e6;"><div class="s" style="left:2px;top:2px;color:#6d6d6d;"><i>900</i></div><div class="ud uu" style="left:79px;top:1px;width:14px;height:8px;"><div class="au"></div></div><div class="ud" style="left:79px;top:9px;width:14px;height:8px;"><div class="ad"></div></div></div><div class="s" style="left:1022px;top:320px;">金<i>&nbsp;&nbsp;</i>币<i>:</i></div><div class="sk" style="left:1078px;top:317px;width:96px;height:20px;background:#fff;"><div class="s" style="left:2px;top:2px;color:#000;"><i>88888888</i></div><div class="ud uu" style="left:79px;top:1px;width:14px;height:8px;"><div class="au"></div></div><div class="ud" style="left:79px;top:9px;width:14px;height:8px;"><div class="ad"></div></div></div><div class="s" style="left:1022px;top:344px;">元<i>&nbsp;&nbsp;</i>宝<i>:</i></div><div class="sk" style="left:1078px;top:341px;width:96px;height:20px;background:#fff;"><div class="s" style="left:2px;top:2px;color:#000;"><i>88888888</i></div><div class="ud uu" style="left:79px;top:1px;width:14px;height:8px;"><div class="au"></div></div><div class="ud" style="left:79px;top:9px;width:14px;height:8px;"><div class="ad"></div></div></div><div class="s" style="left:1022px;top:368px;">游戏点<i>:</i></div><div class="sk" style="left:1078px;top:365px;width:96px;height:20px;background:#fff;"><div class="s" style="left:2px;top:2px;color:#000;"><i>88888888</i></div><div class="ud uu" style="left:79px;top:1px;width:14px;height:8px;"><div class="au"></div></div><div class="ud" style="left:79px;top:9px;width:14px;height:8px;"><div class="ad"></div></div></div><div class="s" style="left:1022px;top:392px;">充值点<i>:</i></div><div class="sk" style="left:1078px;top:389px;width:96px;height:20px;background:#fff;"><div class="s" style="left:2px;top:2px;color:#000;"><i>88888888</i></div><div class="ud uu" style="left:79px;top:1px;width:14px;height:8px;"><div class="au"></div></div><div class="ud" style="left:79px;top:9px;width:14px;height:8px;"><div class="ad"></div></div></div><div class="s" style="left:1022px;top:416px;">声望点<i>:</i></div><div class="sk" style="left:1078px;top:413px;width:96px;height:20px;background:#fff;"><div class="s" style="left:2px;top:2px;color:#000;"><i>88888888</i></div><div class="ud uu" style="left:79px;top:1px;width:14px;height:8px;"><div class="au"></div></div><div class="ud" style="left:79px;top:9px;width:14px;height:8px;"><div class="ad"></div></div></div><div class="s" style="left:1022px;top:440px;"><i>PK&nbsp;</i>点<i>:</i></div><div class="sk" style="left:1078px;top:437px;width:96px;height:20px;background:#fff;"><div class="s" style="left:2px;top:2px;color:#000;"><i>0</i></div><div class="ud uu" style="left:79px;top:1px;width:14px;height:8px;"><div class="au"></div></div><div class="ud" style="left:79px;top:9px;width:14px;height:8px;"><div class="ad"></div></div></div><div class="s" style="left:1022px;top:464px;">贡献度<i>:</i></div><div class="sk" style="left:1078px;top:461px;width:96px;height:20px;background:#fff;"><div class="s" style="left:2px;top:2px;color:#000;"><i>88888888</i></div><div class="ud uu" style="left:79px;top:1px;width:14px;height:8px;"><div class="au"></div></div><div class="ud" style="left:79px;top:9px;width:14px;height:8px;"><div class="ad"></div></div></div><div class="s" style="left:1022px;top:488px;">属性点<i>:</i></div><div class="sk" style="left:1078px;top:485px;width:96px;height:20px;background:#fff;"><div class="s" style="left:2px;top:2px;color:#000;"><i>0</i></div><div class="ud uu" style="left:79px;top:1px;width:14px;height:8px;"><div class="au"></div></div><div class="ud" style="left:79px;top:9px;width:14px;height:8px;"><div class="ad"></div></div></div><div class="s" style="left:1022px;top:512px;">金刚石<i>:</i></div><div class="sk" style="left:1078px;top:509px;width:96px;height:20px;background:#fff;"><div class="s" style="left:2px;top:2px;color:#000;"><i>0</i></div><div class="ud uu" style="left:79px;top:1px;width:14px;height:8px;"><div class="au"></div></div><div class="ud" style="left:79px;top:9px;width:14px;height:8px;"><div class="ad"></div></div></div><div class="s" style="left:1022px;top:536px;">灵<i>&nbsp;&nbsp;</i>符<i>:</i></div><div class="sk" style="left:1078px;top:533px;width:96px;height:20px;background:#fff;"><div class="s" style="left:2px;top:2px;color:#000;"><i>88888888</i></div><div class="ud uu" style="left:79px;top:1px;width:14px;height:8px;"><div class="au"></div></div><div class="ud" style="left:79px;top:9px;width:14px;height:8px;"><div class="ad"></div></div></div><div class="s" style="left:1230px;top:248px;">经验倍率<i>:</i></div><div class="sk" style="left:1286px;top:245px;width:96px;height:20px;background:#fff;"><div class="s" style="left:2px;top:2px;color:#000;"><i>100</i></div><div class="ud uu" style="left:79px;top:1px;width:14px;height:8px;"><div class="au"></div></div><div class="ud" style="left:79px;top:9px;width:14px;height:8px;"><div class="ad"></div></div></div><div class="s" style="left:1230px;top:272px;">经验时间<i>:</i></div><div class="sk" style="left:1286px;top:269px;width:96px;height:20px;background:#fff;"><div class="s" style="left:2px;top:2px;color:#000;"><i>0</i></div><div class="ud uu" style="left:79px;top:1px;width:14px;height:8px;"><div class="au"></div></div><div class="ud" style="left:79px;top:9px;width:14px;height:8px;"><div class="ad"></div></div></div><div class="s" style="left:1230px;top:296px;">转身等级<i>:</i></div><div class="sk" style="left:1286px;top:293px;width:96px;height:20px;background:#fff;"><div class="s" style="left:2px;top:2px;color:#000;"><i>0</i></div><div class="ud uu" style="left:79px;top:1px;width:14px;height:8px;"><div class="au"></div></div><div class="ud" style="left:79px;top:9px;width:14px;height:8px;"><div class="ad"></div></div></div><div class="s" style="left:1230px;top:320px;">内功等级<i>:</i></div><div class="sk" style="left:1286px;top:317px;width:96px;height:20px;background:#e6e6e6;"><div class="s" style="left:2px;top:2px;color:#6d6d6d;"><i>0</i></div><div class="ud uu" style="left:79px;top:1px;width:14px;height:8px;"><div class="au"></div></div><div class="ud" style="left:79px;top:9px;width:14px;height:8px;"><div class="ad"></div></div></div><div class="s" style="left:1230px;top:344px;">内功经验<i>:</i></div><div class="sk" style="left:1286px;top:341px;width:96px;height:20px;background:#e6e6e6;"><div class="s" style="left:2px;top:2px;color:#6d6d6d;"><i>0</i></div><div class="ud uu" style="left:79px;top:1px;width:14px;height:8px;"><div class="au"></div></div><div class="ud" style="left:79px;top:9px;width:14px;height:8px;"><div class="ad"></div></div></div><div class="s" style="left:1230px;top:368px;">内<i>&nbsp;</i>力<i>&nbsp;</i>值<i>:</i></div><div class="sk" style="left:1286px;top:365px;width:96px;height:20px;background:#e6e6e6;"><div class="s" style="left:2px;top:2px;color:#6d6d6d;"><i>0</i></div><div class="ud uu" style="left:79px;top:1px;width:14px;height:8px;"><div class="au"></div></div><div class="ud" style="left:79px;top:9px;width:14px;height:8px;"><div class="ad"></div></div></div><div class="s" style="left:1230px;top:392px;">内力上线<i>:</i></div><div class="sk" style="left:1286px;top:389px;width:96px;height:20px;background:#e6e6e6;"><div class="s" style="left:2px;top:2px;color:#6d6d6d;"><i>0</i></div><div class="ud uu" style="left:79px;top:1px;width:14px;height:8px;"><div class="au"></div></div><div class="ud" style="left:79px;top:9px;width:14px;height:8px;"><div class="ad"></div></div></div><div class="s" style="left:1230px;top:419px;">登录时间<i>:</i></div><div class="sk" style="left:1286px;top:415px;width:152px;height:20px;background:#e6e6e6;"><div class="s" style="left:2px;top:2px;color:#000;"><i>2021-02-06&nbsp;08:57:26</i></div></div><div class="s" style="left:1232px;top:536px;">选择编号<i>:</i></div><div class="sk" style="left:1286px;top:532px;width:96px;height:20px;background:#fff;"><div class="s" style="left:2px;top:2px;color:#000;"><i>0</i></div><div class="ud uu" style="left:79px;top:1px;width:14px;height:8px;"><div class="au"></div></div><div class="ud" style="left:79px;top:9px;width:14px;height:8px;"><div class="ad"></div></div></div><div class="bt" style="left:1271px;top:588px;width:81px;height:24px;"><div class="s btx" style="color:#000;">导出数据<i>(<u>E</u>)</i></div></div><div class="bt" style="left:1358px;top:588px;width:81px;height:24px;"><div class="s btx" style="color:#000;">导入数据<i>(<u>I</u>)</i></div></div><div class="bt bd" style="left:1448px;top:588px;width:81px;height:24px;"><div class="s btx" style="color:#000;">保存修改<i>(<u>S</u>)</i></div><div class="fr" style="left:3px;top:3px;right:3px;bottom:3px;"></div></div></div></div>
</body></html>
